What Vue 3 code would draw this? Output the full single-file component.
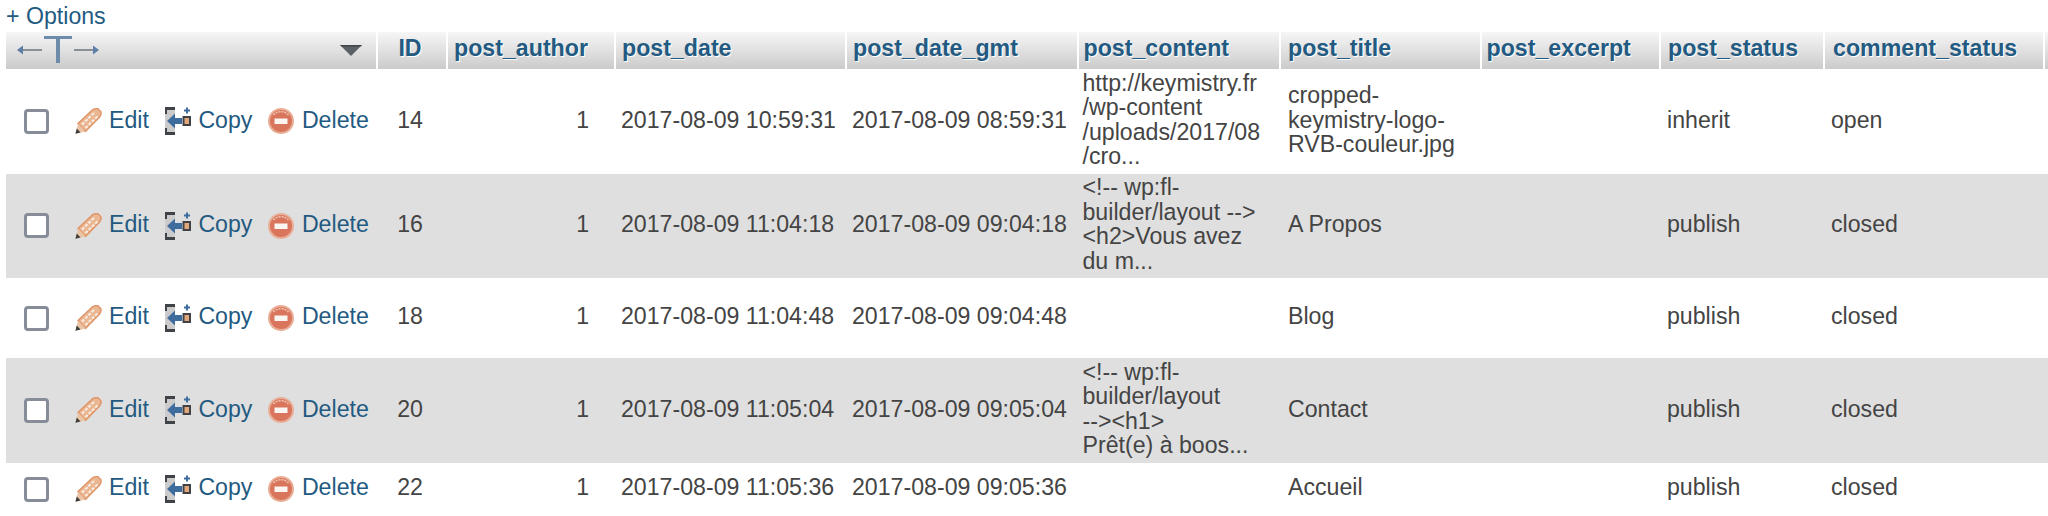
<script setup>
const cols = [
  { name: 'ID', cls: 'id' },
  { name: 'post_author', cls: 'author' },
  { name: 'post_date', cls: 'date' },
  { name: 'post_date_gmt', cls: 'gmt' },
  { name: 'post_content', cls: 'content' },
  { name: 'post_title', cls: 'title' },
  { name: 'post_excerpt', cls: 'excerpt' },
  { name: 'post_status', cls: 'status' },
  { name: 'comment_status', cls: 'comment' }
]
const rows = [
  { h: 'tall', cells: ['14', '1', '2017-08-09 10:59:31', '2017-08-09 08:59:31', 'http://keymistry.fr\n/wp-content\n/uploads/2017/08\n/cro...', 'cropped-\nkeymistry-logo-\nRVB-couleur.jpg', '', 'inherit', 'open'] },
  { h: 'tall', cells: ['16', '1', '2017-08-09 11:04:18', '2017-08-09 09:04:18', '<!-- wp:fl-\nbuilder/layout -->\n<h2>Vous avez\ndu m...', 'A Propos', '', 'publish', 'closed'] },
  { h: 'mid', cells: ['18', '1', '2017-08-09 11:04:48', '2017-08-09 09:04:48', '', 'Blog', '', 'publish', 'closed'] },
  { h: 'tall', cells: ['20', '1', '2017-08-09 11:05:04', '2017-08-09 09:05:04', '<!-- wp:fl-\nbuilder/layout\n--><h1>\nPrêt(e) à boos...', 'Contact', '', 'publish', 'closed'] },
  { h: 'low', cells: ['22', '1', '2017-08-09 11:05:36', '2017-08-09 09:05:36', '', 'Accueil', '', 'publish', 'closed'] }
]
</script>

<template>
  <div class="page">
    <a class="options">+ Options</a>
    <table class="grid">
      <colgroup>
        <col class="w-actions" />
        <col v-for="c in cols" :key="c.cls" :class="'w-' + c.cls" />
        <col class="w-rest" />
      </colgroup>
      <thead>
        <tr>
          <th class="head-tools">
            <div class="tools">
              <svg class="t-arrows" width="82" height="28" viewBox="0 0 82 28">
                <path d="M5 14H25" stroke="#8a9098" stroke-width="2" />
                <path d="M0 14L6 9.500V18.500Z" fill="#5d7ea6" />
                <path d="M57 14H77" stroke="#8a9098" stroke-width="2" />
                <path d="M82 14L76 9.500V18.500Z" fill="#5d7ea6" />
                <path d="M27 1.500H55" stroke="#6d8cac" stroke-width="3" />
                <path d="M41 1.500V27" stroke="#6d8cac" stroke-width="4" />
              </svg>
              <svg class="caret" width="22" height="11" viewBox="0 0 22 11">
                <path d="M0 0H22L11 11Z" fill="#5b6167" />
                <path d="M0 0H22L20.500 1.500H1.500Z" fill="#3f4549" />
              </svg>
            </div>
          </th>
          <th v-for="c in cols" :key="c.cls" :class="'th-' + c.cls">{{ c.name }}</th>
          <th></th>
        </tr>
      </thead>
      <tbody>
        <tr v-for="(r, i) in rows" :key="i" :class="[r.h, i % 2 ? 'even' : 'odd']">
          <td class="actions">
            <div class="action-row">
              <span class="check"></span>
              <a class="act">
                <svg width="27" height="26" viewBox="0 0 27 26">
                  <path d="M3 15.500L17.500 1.800Q20 .2 23 .8L25.800 3.600Q26.600 6.500 24.800 8.800L10.500 23.500Z" fill="#ebb793" stroke="#df9263" stroke-width="1.400" />
                  <path d="M7 16.500L20 4M10.500 20L23.500 7.500" stroke="#f8eee4" stroke-width="2" stroke-dasharray="3 1.500" fill="none" />
                  <path d="M3 15.500L10.500 23.500L.600 25.800Z" fill="#e9c5a6" />
                  <path d="M1.800 20.500L5.500 24.500L.400 25.800Z" fill="#3d3d3d" />
                </svg>
                <span>Edit</span>
              </a>
              <a class="act">
                <svg width="26" height="28" viewBox="0 0 26 28">
                  <path d="M0 1H10V27H0Z" fill="#cbcbcb" />
                  <path d="M0 0H10V3H0ZM0 25H10V28H0ZM0 3H2V7H0ZM0 21H2V25H0Z" fill="#3f4246" />
                  <path d="M2 14L10 6.500V11H17V17H10V21.500Z" fill="#3f6c9e" />
                  <path d="M18.500 10H25V18H18.500Z" fill="#e3a77e" stroke="#3f4246" stroke-width="2" />
                  <path d="M22 .5V6.500M19 3.500H25" stroke="#3f6c9e" stroke-width="2" />
                </svg>
                <span>Copy</span>
              </a>
              <a class="act">
                <svg width="26" height="26" viewBox="0 0 26 26">
                  <circle cx="13" cy="13" r="13" fill="#e9ae96" />
                  <circle cx="13" cy="13" r="11" fill="#d9755c" />
                  <path d="M5.500 7A10 10 0 0 1 20.500 7" stroke="#efc3ae" stroke-width="1.600" fill="none" stroke-dasharray="2 1" />
                  <rect x="6.500" y="10.500" width="13" height="5.500" fill="#fbf5f1" />
                </svg>
                <span>Delete</span>
              </a>
            </div>
          </td>
          <td v-for="(c, j) in cols" :key="c.cls" :class="'td-' + c.cls">{{ r.cells[j] }}</td>
          <td></td>
        </tr>
      </tbody>
    </table>
  </div>
</template>

<style scoped>
.page {
  width: 2048px;
  height: 516px;
  overflow: hidden;
  background: #fff;
  font-family: "Liberation Sans", Arial, sans-serif;
  font-size: 23.150px;
  color: #444;
}
.options {
  display: block;
  height: 32px;
  line-height: 32px;
  padding-left: 6px;
  color: #235a81;
}
.grid {
  margin-left: 6px;
  width: 2042px;
  table-layout: fixed;
  border-collapse: collapse;
}
.w-actions { width: 371px; }
.w-id { width: 70px; }
.w-author { width: 168px; }
.w-date { width: 231px; }
.w-gmt { width: 232px; }
.w-content { width: 202px; }
.w-title { width: 201px; }
.w-excerpt { width: 179px; }
.w-status { width: 164px; }
.w-comment { width: 220px; }
.w-rest { width: 4px; }
th {
  height: 37px;
  padding: 0 0 4px 6px;
  box-sizing: border-box;
  text-align: left;
  font-size: 23.200px;
  font-weight: bold;
  color: #235a81;
  white-space: nowrap;
  text-shadow: 1px 1px 0 #fff;
  background: linear-gradient(#f6f6f6, #cbcbcb);
  border-right: 2px solid #fff;
}
th:last-child { border-right: 0; }
.head-tools { padding: 0 14px 0 11px; }
.tools {
  display: flex;
  align-items: center;
  justify-content: space-between;
}
.t-arrows { margin-bottom: 2px; }
.caret { margin-bottom: 1px; }
.th-id { text-align: center; padding: 0 4px 4px 0; }
.th-content, .th-excerpt { padding-left: 4.500px; }
.th-title, .th-status { padding-left: 7px; }
.th-comment { padding-left: 8px; }
td {
  padding: 0 0 3px 7px;
  line-height: 24.500px;
  vertical-align: middle;
  white-space: pre-line;
  box-sizing: border-box;
}
.tall { height: 104.500px; }
.mid { height: 80px; }
.low { height: 53px; }
.even td { background: #dfdfdf; }
.td-id { text-align: right; padding-right: 24px; }
.td-author { text-align: right; padding-right: 26px; }
.td-date, .td-gmt { padding-left: 6px; }
.td-content { padding-left: 4.500px; }
.td-title { padding-left: 8px; }
.actions { padding: 0 0 0 18px; }
.action-row {
  display: flex;
  align-items: center;
  gap: 16px;
}
.check {
  width: 25px;
  height: 25px;
  box-sizing: border-box;
  border: 3px solid #868d99;
  border-radius: 4px;
  background: #fff;
  margin-right: 9.500px;
}
.act {
  display: flex;
  align-items: center;
  gap: 7.500px;
  color: #235a81;
}
.act span { margin-bottom: 3px; }
</style>
